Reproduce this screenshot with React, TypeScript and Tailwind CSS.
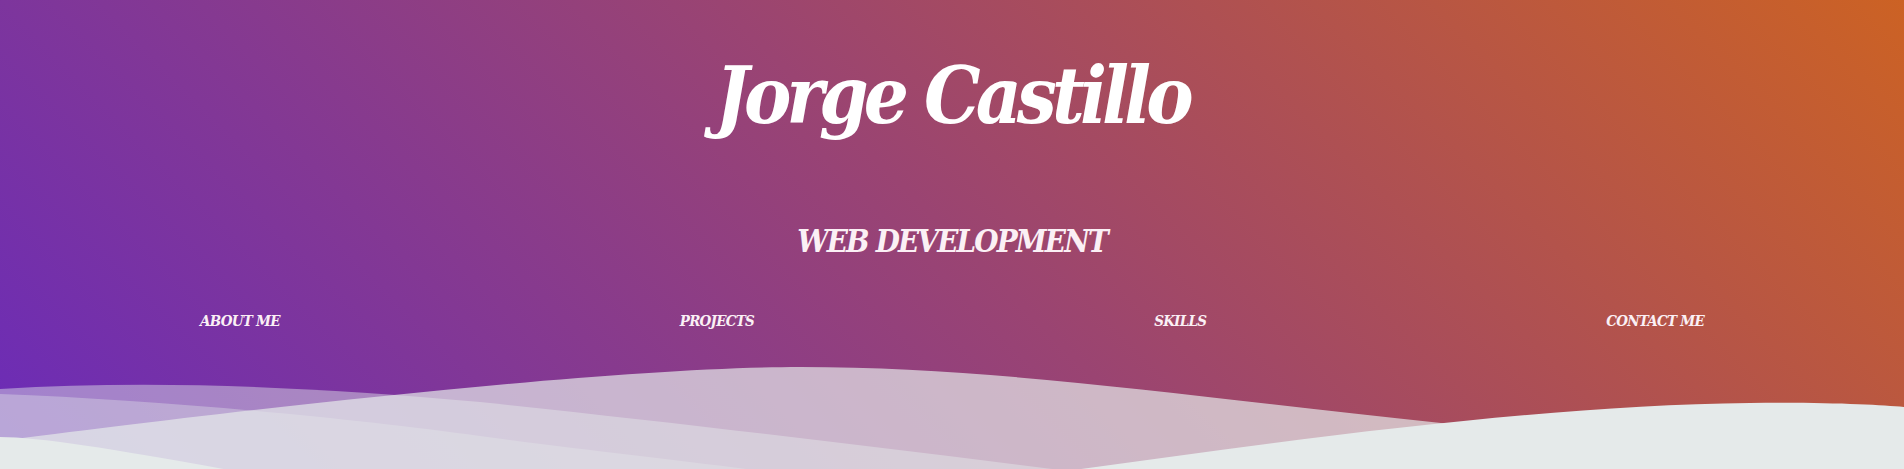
const navItems = ["ABOUT ME", "PROJECTS", "SKILLS", "CONTACT ME"];

function Waves() {
    return (
        <svg
            className="pointer-events-none absolute inset-x-0 bottom-0 h-[120px] w-full"
            viewBox="0 349 1904 120"
            preserveAspectRatio="none"
            aria-hidden="true"
        >
            {/* back layers */}
            <path d="M0,389 C150,380 300,386 480,402 C700,425 900,450 1100,475 L0,475 Z" fill="#e5eaea" fillOpacity="0.45"/>
            <path d="M0,394 C160,400 350,418 480,436 C600,452 700,462 790,475 L0,475 Z" fill="#e5eaea" fillOpacity="0.35"/>
            <path
                d="M0,441 C200,415 600,367 800,367 C1000,367 1200,398 1441,423 C1600,440 1800,460 1904,470 L1904,475 L0,475 Z"
                fill="#e5eaea"
                fillOpacity="0.7"
            />
            {/* front */}
            <path
                d="M0,437 C40,437 120,450 240,472 L1060,472 C1300,438 1550,405 1750,403 C1830,402 1880,405 1904,407 L1904,475 L0,475 Z"
                fill="#e5eaea"
            />
        </svg>
    );
}

export default function App() {
    return (
        <header
            className="relative flex h-[469px] w-full flex-col items-center overflow-hidden bg-[linear-gradient(45deg,#6a2bb9,#9a4472,#cc6224)] font-['DejaVu_Serif_Condensed','DejaVu_Serif',serif] italic text-white">
            <h1 className="mt-[56px] text-[79px] font-bold leading-none tracking-[-0.062em]">Jorge Castillo</h1>
            <h2 className="mt-[91px] text-[31px] font-bold leading-none tracking-[-0.06em] text-[#fbf0f5]">
                WEB DEVELOPMENT
            </h2>
            <nav className="mt-[57px] flex w-full justify-around">
                {navItems.map((item) => (
                    <a key={item} href="#" className="text-[15px] font-bold leading-none tracking-[-0.05em] text-[#fbf0f5]">
                        {item}
                    </a>
                ))}
            </nav>
            <Waves/>
        </header>
    );
}
